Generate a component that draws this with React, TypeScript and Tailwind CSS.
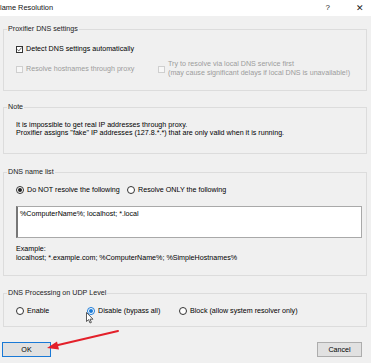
import React from "react";

const Check = ({ checked, disabled }: { checked?: boolean; disabled?: boolean }) => (
  <span
    className={
      "relative inline-block w-[7px] h-[7px] shrink-0 border " +
      (disabled ? "border-[#cfcfcf] bg-[#f7f7f7]" : "border-[#333] bg-white")
    }
  >
    {checked && (
      <svg viewBox="0 0 7 7" className="absolute left-0 top-0 w-[5px] h-[5px]">
        <path d="M0.5 3.5 L2.5 5.5 L6.5 0.8" stroke="#222" strokeWidth="1" fill="none" />
      </svg>
    )}
  </span>
);

const Radio = ({ checked, blue }: { checked?: boolean; blue?: boolean }) => (
  <span
    className={
      "inline-flex items-center justify-center w-[8px] h-[8px] shrink-0 rounded-full border bg-white " +
      (blue ? "border-[#1979d6]" : "border-[#333]")
    }
  >
    {checked && (
      <span className={"block w-[4px] h-[4px] rounded-full " + (blue ? "bg-[#1979d6]" : "bg-[#222]")} />
    )}
  </span>
);

const Group = ({
  label,
  className,
  children,
}: {
  label: string;
  className: string;
  children: React.ReactNode;
}) => (
  <div className={"relative border border-[#dcdcdc] " + className}>
    <span className="absolute left-[3px] top-[-5px] bg-[#f0f0f0] px-[1px] leading-[8px] text-[#222]">
      {label}
    </span>
    {children}
  </div>
);

export default function App() {
  return (
    <div
      className="relative w-[371px] h-[363px] overflow-hidden bg-[#f0f0f0] text-[7.15px] leading-[8px] text-[#000]"
      style={{ fontFamily: '"Liberation Sans", Arial, sans-serif' }}
    >
      {/* title bar */}
      <div className="h-[16px] bg-white flex items-center">
        <span className="text-[7.4px] text-[#111] ml-0 mt-[-1px]">lame Resolution</span>
        <span className="ml-auto mr-[26px] text-[8px] text-[#222]">?</span>
        <span className="mr-[7px] text-[9px] text-[#222] font-light">✕</span>
      </div>

      <div className="flex flex-col px-[3px] pr-[4px]">
        {/* Group 1 */}
        <Group label="Proxifier DNS settings" className="mt-[13px] h-[62px] pl-[12px]">
          <div className="flex items-center gap-[3px] mt-[15px]">
            <Check checked />
            <span>Detect DNS settings automatically</span>
          </div>
          <div className="flex mt-[7px] text-[#9c9c9c] leading-[9px]">
            <div className="flex items-center gap-[3px] h-[18px] w-[142px]">
              <Check disabled />
              <span>Resolve hostnames through proxy</span>
            </div>
            <div className="flex items-center gap-[3px]">
              <Check disabled />
              <div className="flex flex-col">
                <span>Try to resolve via local DNS service first</span>
                <span>(may cause significant delays if local DNS is unavailable!)</span>
              </div>
            </div>
          </div>
        </Group>

        {/* Note */}
        <Group label="Note" className="mt-[16px] h-[47px] pl-[12px]">
          <div className="mt-[13px] flex flex-col">
            <span>It is impossible to get real IP addresses through proxy.</span>
            <span>Proxifier assigns "fake" IP addresses (127.8.*.*) that are only valid when it is running.</span>
          </div>
        </Group>

        {/* DNS name list */}
        <Group label="DNS name list" className="mt-[18px] h-[104px] pl-[12px] pr-[4px]">
          <div className="flex items-center mt-[13px]">
            <div className="flex items-center gap-[3px] w-[111px]">
              <Radio checked />
              <span>Do NOT resolve the following</span>
            </div>
            <div className="flex items-center gap-[3px]">
              <Radio />
              <span>Resolve ONLY the following</span>
            </div>
          </div>
          <div className="mt-[12px] h-[32px] bg-white border border-[#a9a9a9] border-l-[2px] border-l-[#777] pl-[2px] pt-[3px]">
            %ComputerName%; localhost; *.local
          </div>
          <div className="mt-[7px] flex flex-col leading-[8.5px]">
            <span>Example:</span>
            <span>localhost; *.example.com; %ComputerName%; %SimpleHostnames%</span>
          </div>
        </Group>

        {/* UDP */}
        <Group label="DNS Processing on UDP Level" className="mt-[17px] h-[34px] pl-[12px]">
          <div className="flex items-center mt-[13px]">
            <div className="flex items-center gap-[3px] w-[71px]">
              <Radio />
              <span>Enable</span>
            </div>
            <div className="flex items-center gap-[3px] w-[92px]">
              <Radio checked blue />
              <span>Disable (bypass all)</span>
            </div>
            <div className="flex items-center gap-[3px]">
              <Radio />
              <span>Block (allow system resolver only)</span>
            </div>
          </div>
        </Group>

        {/* buttons */}
        <div className="flex justify-between mt-[15px] pl-[0px] pr-[5px]">
          <div className="w-[49px] h-[15px] border border-[#1979d6] bg-[#e1e1e1] flex items-center justify-center ml-[-1px]">
            OK
          </div>
          <div className="w-[45px] h-[15px] border border-[#adadad] bg-[#e1e1e1] flex items-center justify-center">
            Cancel
          </div>
        </div>
      </div>

      {/* cursor */}
      <svg className="absolute left-[86px] top-[312px] w-[8px] h-[12px]" viewBox="0 0 8 12">
        <path d="M0.5 0.5 L0.5 9.5 L2.6 7.6 L4 11 L5.4 10.4 L4 7.2 L7 7.2 Z" fill="#fff" stroke="#333" strokeWidth="0.8" />
      </svg>

      {/* red arrow */}
      <svg className="absolute left-0 top-0 w-[371px] h-[363px] pointer-events-none" viewBox="0 0 371 363">
        <line x1="118" y1="331" x2="56" y2="345.5" stroke="#e3202a" strokeWidth="2" strokeLinecap="round" />
        <polygon points="47,348 57,341.5 59,349.5" fill="#e3202a" />
      </svg>
    </div>
  );
}
